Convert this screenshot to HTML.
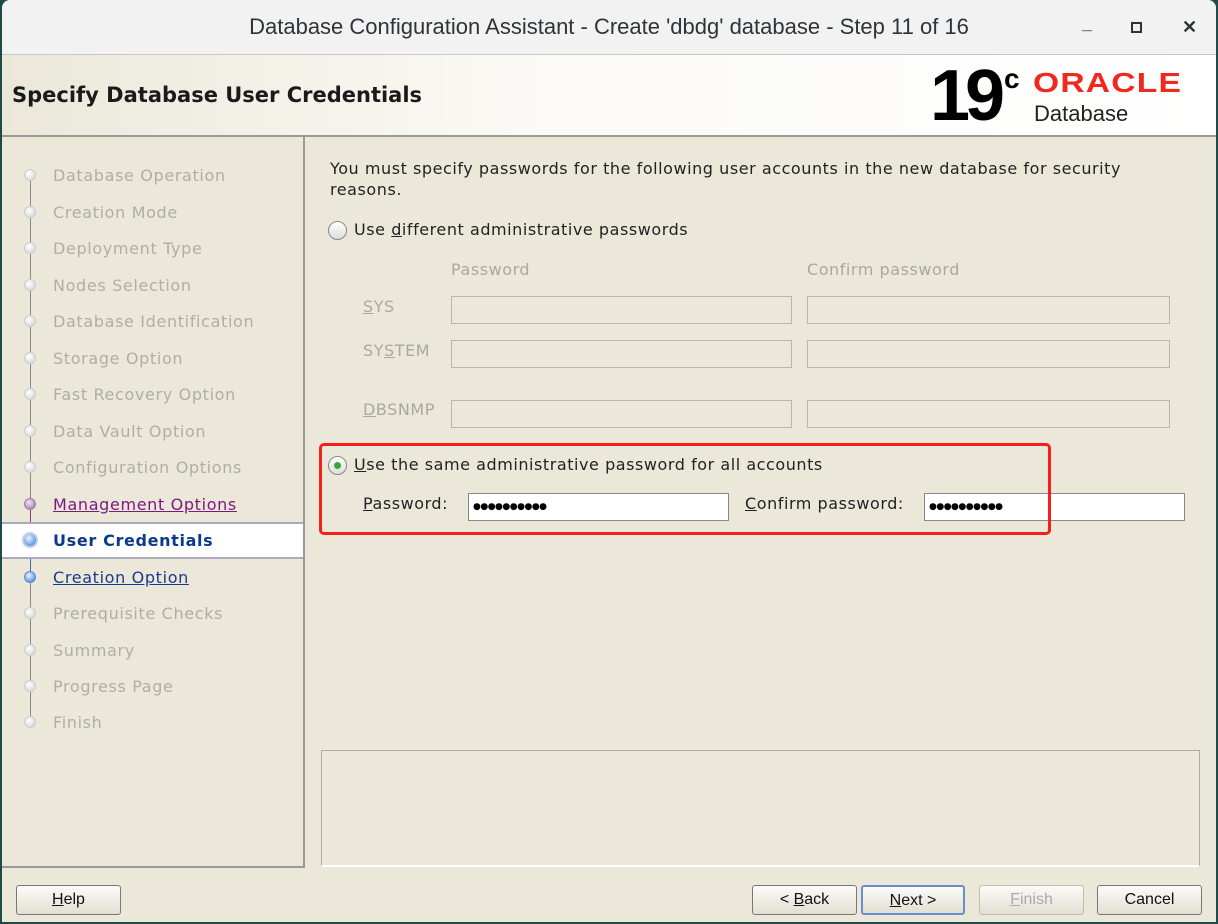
<!DOCTYPE html>
<html><head><style>
*{margin:0;padding:0;box-sizing:border-box}
body{width:1218px;height:924px;overflow:hidden;background:#1f4a48;font-family:"DejaVu Sans","Liberation Sans",sans-serif;position:relative}
.win{position:absolute;left:2px;top:0;width:1214px;height:922px;background:#ebe8da;border-radius:8px 8px 0 0;overflow:hidden}
.title{position:absolute;left:0;top:0;width:100%;height:55px;background:#f2f2f2;border-bottom:1px solid #c8c8c8;text-align:center;font:22px "Liberation Sans",sans-serif;color:#2e3436;line-height:54px}
.title span{position:absolute;top:0;font-weight:bold;font-size:18px}
.hdr{position:absolute;left:0;top:55px;width:100%;height:82px;background:linear-gradient(90deg,#ebe8da 0%,#fbfaf6 45%,#fff 100%);border-bottom:2px solid #9a9a98}
.hdr h1{position:absolute;left:10px;top:28px;font-size:21px;font-weight:bold;color:#1a1a1a;letter-spacing:0}
.left{position:absolute;left:0;top:137px;width:303px;height:731px;border-right:2px solid #9a9a98;border-bottom:2px solid #9a9a98}
.st{position:absolute;left:51px;font-size:16px;color:#b0ada3;letter-spacing:.65px}
.dot{position:absolute;left:22px;width:12px;height:12px;border-radius:50%;background:radial-gradient(circle at 40% 35%,#fff,#ddd 70%,#bbb);border:1px solid #ccc}
.line{position:absolute;left:28px;width:1px;background:#8a8a8a}
.sel{position:absolute;left:0;top:385px;width:301px;height:37px;background:#fff;border-top:2px solid #aab;border-bottom:2px solid #aab}
.c{position:absolute;font-size:16px;color:#222;letter-spacing:.55px}
.g{color:#aaa7a0}
.f{position:absolute;height:28px;border:1px solid #b9b6ac;background:#ebe8da}
.fw{position:absolute;height:28px;border:1px solid #888;background:#fff;font-size:9px;padding-left:4px;line-height:26px;letter-spacing:-0.5px}
.radio{position:absolute;width:19px;height:19px;border-radius:50%;border:1px solid #888;background:linear-gradient(#fff,#ddd)}
.btn{position:absolute;top:885px;height:30px;border:1px solid #777;border-radius:3px;background:linear-gradient(#fbfbf8,#e2dfd2);font:16px "Liberation Sans",sans-serif;text-align:center;line-height:28px;color:#111}
u{text-decoration:underline}
</style></head><body>
<div class="win">
<div class="title">Database Configuration Assistant - Create 'dbdg' database - Step 11 of 16
<span style="left:1080px;top:-4px">_</span><span style="left:1129px;top:-1px;width:11px;height:11px;border:2px solid #2e3436;top:22px"></span><span style="left:1180px">✕</span></div>
<div class="hdr"><h1>Specify Database User Credentials</h1>
<div style="position:absolute;left:928px;top:4px;font:bold 72px 'Liberation Sans',sans-serif;letter-spacing:-5px;color:#000;line-height:74px">19</div>
<div style="position:absolute;left:1002px;top:8px;font:bold 28px 'Liberation Sans',sans-serif;color:#000">c</div>
<div style="position:absolute;left:1031px;top:12px;font:bold 28px 'Liberation Sans',sans-serif;color:#f0281e;letter-spacing:1px;transform:scaleX(1.2);transform-origin:left">ORACLE</div>
<div style="position:absolute;left:1032px;top:46px;font:22px 'Liberation Sans',sans-serif;color:#222">Database</div>
</div>
<div class="left">
<div class="line" style="top:38px;height:333px"></div>
<div class="line" style="top:368px;height:35px;background:#8a3a8a"></div>
<div class="line" style="top:403px;height:40px;background:#3a6ad0"></div>
<div class="line" style="top:443px;height:143px"></div>
<div class="sel"></div>
<div class="dot" style="top:32px"></div><div class="st" style="top:29px">Database Operation</div>
<div class="dot" style="top:69px"></div><div class="st" style="top:66px">Creation Mode</div>
<div class="dot" style="top:105px"></div><div class="st" style="top:102px">Deployment Type</div>
<div class="dot" style="top:142px"></div><div class="st" style="top:139px">Nodes Selection</div>
<div class="dot" style="top:178px"></div><div class="st" style="top:175px">Database Identification</div>
<div class="dot" style="top:215px"></div><div class="st" style="top:212px">Storage Option</div>
<div class="dot" style="top:251px"></div><div class="st" style="top:248px">Fast Recovery Option</div>
<div class="dot" style="top:288px"></div><div class="st" style="top:285px">Data Vault Option</div>
<div class="dot" style="top:324px"></div><div class="st" style="top:321px">Configuration Options</div>
<div class="dot" style="top:361px;background:radial-gradient(circle at 40% 35%,#f4e6f4,#b38ab8 70%,#8a5a90);border-color:#a080a8"></div><div class="st" style="top:358px;color:#7a1a80;text-decoration:underline">Management Options</div>
<div class="dot" style="top:395px;left:20px;width:16px;height:16px;background:radial-gradient(circle at 40% 35%,#eef4ff,#7aa6e8 60%,#4a7ad0);border:2px solid #bcd0ee"></div><div class="st" style="top:394px;color:#0a3a8a;font-weight:bold">User Credentials</div>
<div class="dot" style="top:434px;background:radial-gradient(circle at 40% 35%,#eef4ff,#6a9ae8 70%,#3a6ad0);border-color:#5a8ad8"></div><div class="st" style="top:431px;color:#1a3a8a;text-decoration:underline">Creation Option</div>
<div class="dot" style="top:470px"></div><div class="st" style="top:467px">Prerequisite Checks</div>
<div class="dot" style="top:507px"></div><div class="st" style="top:504px">Summary</div>
<div class="dot" style="top:543px"></div><div class="st" style="top:540px">Progress Page</div>
<div class="dot" style="top:579px"></div><div class="st" style="top:576px">Finish</div>
</div>
<div class="c" style="left:328px;top:158px;width:830px;line-height:21px">You must specify passwords for the following user accounts in the new database for security reasons.</div>
<div class="radio" style="left:326px;top:221px"></div>
<div class="c" style="left:352px;top:220px">Use <u>d</u>ifferent administrative passwords</div>
<div class="c g" style="left:449px;top:260px">Password</div>
<div class="c g" style="left:805px;top:260px">Confirm password</div>
<div class="c g" style="left:361px;top:297px"><u>S</u>YS</div>
<div class="c g" style="left:361px;top:341px">SY<u>S</u>TEM</div>
<div class="c g" style="left:361px;top:400px"><u>D</u>BSNMP</div>
<div class="f" style="left:449px;top:296px;width:341px"></div><div class="f" style="left:805px;top:296px;width:363px"></div>
<div class="f" style="left:449px;top:340px;width:341px"></div><div class="f" style="left:805px;top:340px;width:363px"></div>
<div class="f" style="left:449px;top:400px;width:341px"></div><div class="f" style="left:805px;top:400px;width:363px"></div>
<div class="radio" style="left:326px;top:456px"><div style="position:absolute;left:5px;top:5px;width:7px;height:7px;border-radius:50%;background:#3aa63a"></div></div>
<div class="c" style="left:352px;top:455px"><u>U</u>se the same administrative password for all accounts</div>
<div class="c" style="left:361px;top:494px"><u>P</u>assword:</div>
<div class="fw" style="left:466px;top:493px;width:261px">●●●●●●●●●●</div>
<div class="c" style="left:743px;top:494px"><u>C</u>onfirm password:</div>
<div class="fw" style="left:922px;top:493px;width:261px">●●●●●●●●●●</div>
<div style="position:absolute;left:317px;top:443px;width:732px;height:92px;border:3px solid #f5201a;border-radius:5px"></div>
<div style="position:absolute;left:319px;top:750px;width:879px;height:117px;border:1px solid #b0ada0;border-bottom:2px solid #fff"></div>
<div class="btn" style="left:14px;width:105px"><u>H</u>elp</div>
<div class="btn" style="left:750px;width:105px">&lt; <u>B</u>ack</div>
<div class="btn" style="left:859px;width:104px;border:2px solid #6a8ed0"><u>N</u>ext &gt;</div>
<div class="btn" style="left:977px;width:105px;color:#aaa;border-color:#c0bdb0"><u>F</u>inish</div>
<div class="btn" style="left:1095px;width:105px">Cancel</div>
</div>
</body></html>
